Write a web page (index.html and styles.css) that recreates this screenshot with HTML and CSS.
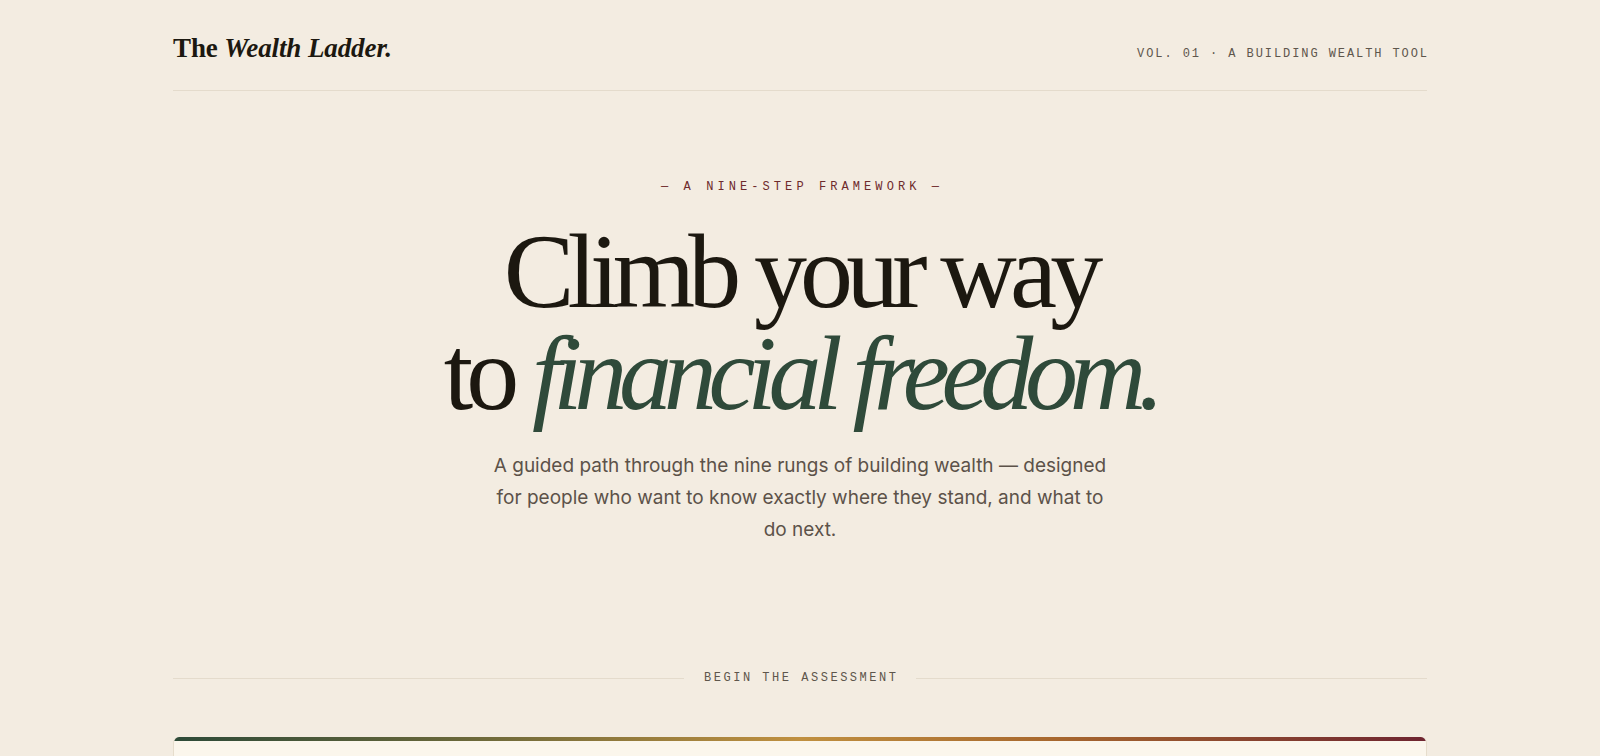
FILE: index.html
```html
<!DOCTYPE html>
<html lang="en">
<head>
<meta charset="utf-8">
<title>The Wealth Ladder</title>
<link rel="stylesheet" href="styles.css">
</head>
<body>
<div class="page">
  <header class="site-header">
    <div class="logo">The <em>Wealth Ladder.</em></div>
    <div class="meta">VOL. 01 · A BUILDING WEALTH TOOL</div>
  </header>

  <section class="hero">
    <p class="eyebrow">— A NINE-STEP FRAMEWORK —</p>
    <h1 class="headline">Climb your way<br>to <em>financial freedom.</em></h1>
    <p class="lede">A guided path through the nine rungs of building wealth — designed for people who want to know exactly where they stand, and what to do next.</p>
  </section>

  <div class="divider">
    <span class="rule"></span>
    <span class="divider-label">BEGIN THE ASSESSMENT</span>
    <span class="rule"></span>
  </div>

  <div class="card">
    <div class="card-bar"></div>
    <div class="card-body"></div>
  </div>
</div>
</body>
</html>
```

FILE: styles.css
```css
* { box-sizing: border-box; }
html, body { margin: 0; padding: 0; }
body {
  background: #f3ece1;
  color: #1e1a12;
  font-family: "Inter", "Liberation Sans", sans-serif;
  overflow: hidden;
}
.page {
  max-width: 1254px;
  margin: 0 auto;
}
.site-header {
  display: flex;
  justify-content: space-between;
  align-items: baseline;
  padding: 33px 0 0;
  border-bottom: 1px solid #e4dbcc;
  height: 91px;
}
.logo {
  font-family: "Liberation Serif", "Times New Roman", serif;
  font-weight: 700;
  font-size: 27px;
  color: #1c1810;
  letter-spacing: -0.1px;
}
.logo em { font-style: italic; }
.meta {
  font-family: "Liberation Mono", "DejaVu Sans Mono", monospace;
  font-size: 12px;
  letter-spacing: 0.16em;
  color: #5e564c;
  margin-right: -2px;
}
.hero {
  text-align: center;
  padding-top: 88px;
}
.eyebrow {
  margin: 0;
  font-family: "Liberation Mono", "DejaVu Sans Mono", monospace;
  font-size: 12px;
  letter-spacing: 0.34em;
  color: #6e2a2c;
  line-height: 16px;
  padding-left: 0.34em;
}
.headline {
  margin: 26px 0 0;
  font-family: "Liberation Serif", "Times New Roman", serif;
  font-weight: 400;
  font-size: 106px;
  line-height: 102px;
  letter-spacing: -0.065em;
  color: #1c1810;
}
.headline em {
  font-style: italic;
  color: #2f4a3a;
  letter-spacing: -0.078em;
}
.lede {
  margin: 25px auto 0;
  max-width: 620px;
  font-size: 19px;
  line-height: 32px;
  color: #5c5249;
}
.divider {
  display: flex;
  align-items: center;
  gap: 18px;
  margin-top: 125px;
}
.rule {
  flex: 1;
  height: 1px;
  background: #e4dbcc;
}
.divider-label {
  font-family: "Liberation Mono", "DejaVu Sans Mono", monospace;
  font-size: 12px;
  letter-spacing: 0.21em;
  padding-left: 0.21em;
  color: #5e564c;
}
.card {
  margin-top: 52px;
  background: #fbf6ec;
  border: 1px solid #e6ddcc;
  border-top: none;
  border-radius: 6px 6px 0 0;
  overflow: hidden;
}
.card-bar {
  height: 4px;
  background: linear-gradient(90deg, #2d4a38 0%, #6f6a3a 25%, #c09040 50%, #a8682e 70%, #6e2530 100%);
}
.card-body { height: 200px; }
```
